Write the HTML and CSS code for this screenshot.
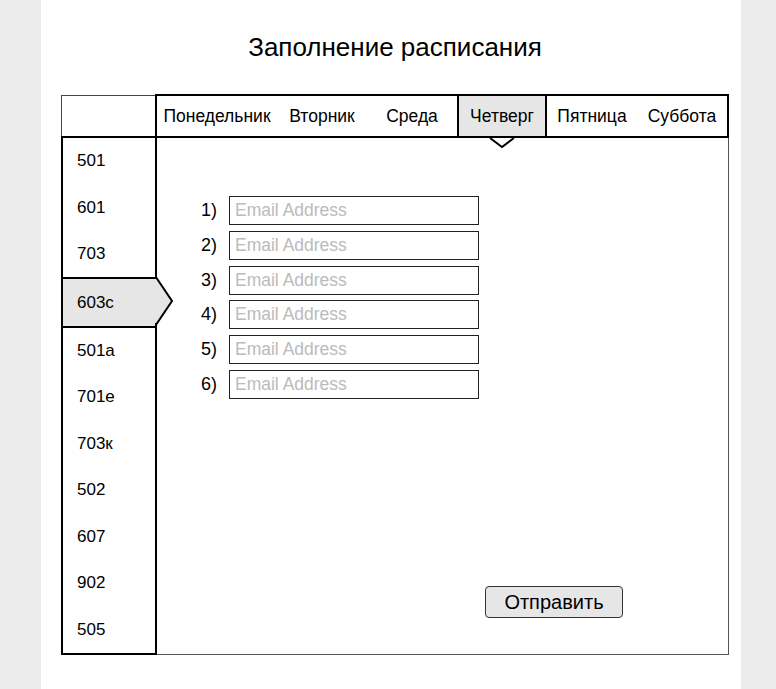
FILE: index.html
```html
<!DOCTYPE html>
<html lang="ru">
<head>
<meta charset="utf-8">
<title>Заполнение расписания</title>
<link rel="stylesheet" href="styles.css">
</head>
<body>
<div class="page">
  <div class="wrap">
    <h1 class="title">Заполнение расписания</h1>
    <div class="top">
      <div class="corner"></div>
      <div class="tabbar">
        <div class="tab tab-wide">Понедельник</div>
        <div class="tab">Вторник</div>
        <div class="tab">Среда</div>
        <div class="tab tab-active">Четверг
          <svg class="tab-arrow" width="26" height="11" viewBox="0 0 26 11"><polyline points="1,0 13,9 25,0" fill="#fff" stroke="#000" stroke-width="2"/></svg>
        </div>
        <div class="tab">Пятница</div>
        <div class="tab">Суббота</div>
      </div>
    </div>
    <div class="main">
      <div class="sidebar">
        <div class="item">501</div>
        <div class="item">601</div>
        <div class="item">703</div>
        <div class="item item-active">603c
          <svg class="item-arrow" width="19" height="48" viewBox="0 0 19 48"><polygon points="0,0 2,0 18,24 2,48 0,48" fill="#e6e6e6"/><polyline points="0,1 1.5,1 17,24 1.5,47 0,47" fill="none" stroke="#000" stroke-width="2"/></svg>
        </div>
        <div class="item">501a</div>
        <div class="item">701e</div>
        <div class="item">703к</div>
        <div class="item">502</div>
        <div class="item">607</div>
        <div class="item">902</div>
        <div class="item">505</div>
      </div>
      <div class="content">
        <div class="form">
          <div class="row"><span class="num">1)</span><input class="field" type="text" placeholder="Email Address"></div>
          <div class="row"><span class="num">2)</span><input class="field" type="text" placeholder="Email Address"></div>
          <div class="row"><span class="num">3)</span><input class="field" type="text" placeholder="Email Address"></div>
          <div class="row"><span class="num">4)</span><input class="field" type="text" placeholder="Email Address"></div>
          <div class="row"><span class="num">5)</span><input class="field" type="text" placeholder="Email Address"></div>
          <div class="row"><span class="num">6)</span><input class="field" type="text" placeholder="Email Address"></div>
        </div>
        <div class="actions"><button class="submit" type="button">Отправить</button></div>
      </div>
    </div>
  </div>
</div>
</body>
</html>
```

FILE: styles.css
```css
html, body {
  margin: 0;
  padding: 0;
}
body {
  background: #ececec;
  font-family: "Liberation Sans", Arial, sans-serif;
  color: #000;
}
.page {
  margin-left: 41px;
  width: 700px;
  min-height: 689px;
  background: #fff;
  padding-left: 20px;
  box-sizing: border-box;
}
.wrap {
  width: 668px;
}
.title {
  margin: 0;
  padding-top: 32px;
  height: 94px;
  box-sizing: border-box;
  font-size: 26px;
  line-height: 30px;
  font-weight: normal;
  text-align: center;
}
.top {
  display: flex;
  height: 44px;
}
.corner {
  width: 94px;
  margin-top: 1px;
  border-top: 1px solid #444;
  border-left: 1px solid #444;
  box-sizing: border-box;
}
.tabbar {
  flex: 1;
  display: flex;
  border: 2px solid #000;
  box-sizing: border-box;
}
.tab {
  width: 90px;
  display: flex;
  align-items: center;
  justify-content: center;
  font-size: 17.5px;
  box-sizing: border-box;
  position: relative;
}
.tab-wide {
  width: 120px;
}
.tab-active {
  background: #e6e6e6;
  border-left: 2px solid #000;
  border-right: 2px solid #000;
}
.tab-arrow {
  position: absolute;
  left: 50%;
  top: 100%;
  margin-left: -13px;
  margin-top: 2px;
}
.main {
  display: flex;
}
.sidebar {
  width: 96px;
  height: 519px;
  margin-top: -2px;
  border: 2px solid #000;
  box-sizing: border-box;
  display: flex;
  flex-direction: column;
  position: relative;
  z-index: 1;
}
.item {
  flex: 1;
  display: flex;
  align-items: center;
  padding-left: 14px;
  font-size: 17px;
  box-sizing: border-box;
  position: relative;
}
.item-active {
  background: #e6e6e6;
  border-top: 2px solid #000;
  border-bottom: 2px solid #000;
}
.item-arrow {
  position: absolute;
  left: 100%;
  top: -2px;
}
.content {
  flex: 1;
  height: 517px;
  border-right: 1px solid #555;
  border-bottom: 1px solid #555;
  box-sizing: border-box;
  display: flex;
  flex-direction: column;
}
.form {
  padding-top: 58px;
  padding-left: 16px;
  display: flex;
  flex-direction: column;
  gap: 5.8px;
}
.row {
  display: flex;
  align-items: center;
  gap: 12px;
}
.num {
  width: 44px;
  text-align: right;
  font-size: 18px;
}
.field {
  width: 250px;
  height: 29px;
  margin: 0;
  padding: 0 5px;
  border: 1px solid #222;
  box-sizing: border-box;
  font-family: "Liberation Sans", Arial, sans-serif;
  font-size: 17.5px;
  outline: none;
  background: #fff;
}
.field::placeholder {
  color: #bbb;
}
.actions {
  margin-top: auto;
  margin-bottom: 36px;
  padding-left: 328px;
}
.submit {
  width: 138px;
  height: 32px;
  margin: 0;
  padding: 0;
  border: 1px solid #333;
  border-radius: 4px;
  background: #e6e6e6;
  font-family: "Liberation Sans", Arial, sans-serif;
  font-size: 20px;
  color: #000;
}
```
